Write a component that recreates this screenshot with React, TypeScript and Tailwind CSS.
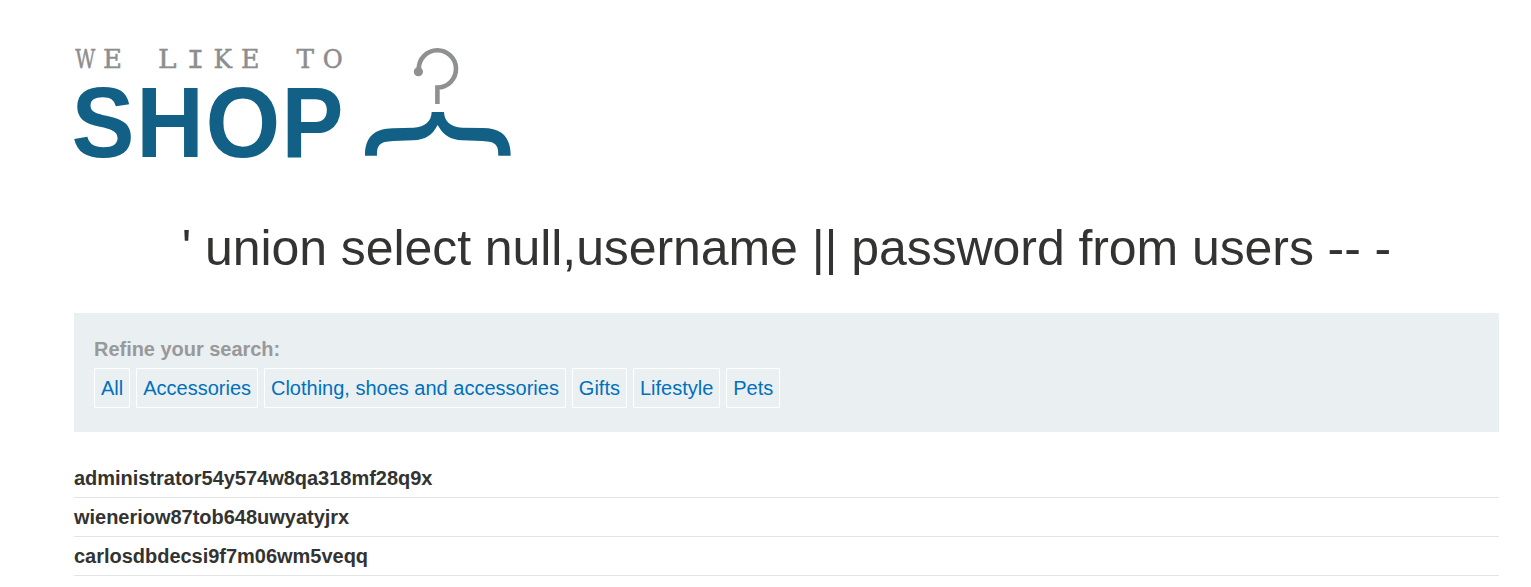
const categories = ["All", "Accessories", "Clothing, shoes and accessories", "Gifts", "Lifestyle", "Pets"];

const users = ["administrator54y574w8qa318mf28q9x", "wieneriow87tob648uwyatyjrx", "carlosdbdecsi9f7m06wm5veqq"];

const serif = "font-['DejaVu_Serif',serif] text-[26px]";
const mono = "font-['Liberation_Mono',monospace] text-[28px]";

const tagline = [
  { letter: "W", x: 75.3, width: 20, font: serif },
  { letter: "E", x: 103, width: 19, font: serif },
  { letter: "L", x: 158, width: 18.5, font: serif },
  { letter: "I", x: 186.8, width: 17.4, font: mono },
  { letter: "K", x: 213.5, width: 18.5, font: serif },
  { letter: "E", x: 241, width: 18.5, font: serif },
  { letter: "T", x: 296.5, width: 17.5, font: serif },
  { letter: "O", x: 322.8, width: 20, font: serif },
];

const wordmark = [
  { letter: "S", x: 71.4, width: 63 },
  { letter: "H", x: 136.2, width: 67.6 },
  { letter: "O", x: 205.5, width: 74.8 },
  { letter: "P", x: 281.4, width: 62 },
];

function Logo() {
  return (
    <svg className="block overflow-visible" width="440" height="120" viewBox="74 44 440 120" role="img" aria-label="We like to shop">
      <g className="fill-[#8c8d8e]" stroke="#8c8d8e" strokeWidth=".5">
        {tagline.map(({ letter, x, width, font }) => (
          <text key={x} x={x} y="67.8" textLength={width} lengthAdjust="spacingAndGlyphs" className={font}>
            {letter}
          </text>
        ))}
      </g>
      <g className="fill-[#126085] font-['Liberation_Sans',Arial,sans-serif] text-[101px] font-bold">
        {wordmark.map(({ letter, x, width }) => (
          <text key={x} x={x} y="156.6" textLength={width} lengthAdjust="spacingAndGlyphs">
            {letter}
          </text>
        ))}
      </g>
      <path d="M418.8 69.2a18.6 18.6 0 1 1 18.6 18.3V104" fill="none" stroke="#8f9092" strokeWidth="4.6" />
      <circle cx="418.4" cy="71.7" r="4.6" fill="#8f9092" />
      <path
        transform="translate(350 35) scale(.33333)"
        d="M245 231H282C283 258 300 276 337 278L398 279C455 279 482 306 482 362H445C445 331 440 320 397 318L337 316C301 314 280 301 263 270C247 301 226 314 190 316L130 318C87 320 81 331 81 362H45C45 306 73 281 129 280L190 278C227 276 244 258 245 231Z"
        fill="#126085"
      />
    </svg>
  );
}

export default function App() {
  return (
    <main className="h-[587px] overflow-hidden bg-white pr-8 pl-[74px] font-['Liberation_Sans',Arial,sans-serif] text-[20px] text-[#333332]">
      <header className="pt-11">
        <Logo />
      </header>
      <h1 className="mt-[49px] h-[71px] text-center text-[50px] leading-[70px] tracking-[-0.08px] whitespace-nowrap">
        ' union select null,username || password from users -- -
      </h1>
      <section className="mt-[29px] h-[119px] bg-[#eaeff2] px-5 pt-[23px]">
        <p className="h-8 leading-[26px] font-bold tracking-[-0.03px] text-[#999999]">Refine your search:</p>
        <nav className="flex gap-[5.96px]">
          {categories.map((category) => (
            <a key={category} href="#" className="h-10 border border-white px-[6px] leading-[38px] whitespace-nowrap text-[#0071bc]">
              {category}
            </a>
          ))}
        </nav>
      </section>
      <ul className="mt-[27px] font-bold tracking-[-0.02px]">
        {users.map((user) => (
          <li key={user} className="h-[39px] border-b border-[#e3e5e5] leading-[38px]">
            {user}
          </li>
        ))}
      </ul>
    </main>
  );
}
